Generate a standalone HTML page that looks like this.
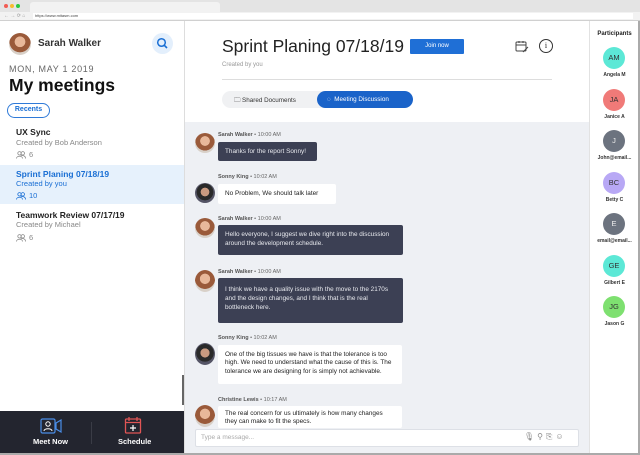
<!DOCTYPE html>
<html><head><meta charset="utf-8"><style>
*{margin:0;padding:0;box-sizing:border-box}
body{width:640px;height:455px;overflow:hidden;font-family:"Liberation Sans",sans-serif;background:#fff;position:relative;color:#222}
.a{position:absolute}
.av{border-radius:50%;position:absolute}
.bub{position:absolute;left:218px;font-size:6.4px;line-height:9px;padding:5px 7px;border-radius:2px}
.dk{background:#3c4054;color:#e8e9ee}
.wt{background:#fff;color:#222}
.nm{position:absolute;left:218px;font-size:5.5px;color:#666}
.nm b{color:#555}
.pc{position:absolute;left:603px;width:22px;height:22px;border-radius:50%;color:#333;font-size:7.5px;text-align:center;line-height:22px}
.pl{position:absolute;left:589px;width:51px;text-align:center;font-size:5px;font-weight:bold;color:#333}
.face{background:radial-gradient(circle at 50% 40%,#e8b89a 0 30%,#9a5a3a 32% 60%,#d8d0c8 62%)}
.face2{background:radial-gradient(circle at 50% 45%,#c99a80 0 28%,#2a2a2a 30% 55%,#556 57%)}
.cnt{position:absolute;left:16px;font-size:7.5px;color:#888;display:flex;align-items:center;gap:3px}
</style></head><body>
<div class="a" style="left:0;top:0;width:640px;height:12px;background:#e4e4e4"></div>
<div class="a" style="left:30px;top:2px;width:190px;height:10px;background:#f2f2f2;border-radius:3px 3px 0 0"></div>
<div class="av" style="left:4px;top:4px;width:4px;height:4px;background:#f25c54"></div>
<div class="av" style="left:10px;top:4px;width:4px;height:4px;background:#f6bc2f"></div>
<div class="av" style="left:16px;top:4px;width:4px;height:4px;background:#2ac840"></div>
<div class="a" style="left:0;top:12px;width:640px;height:9px;background:#f2f2f2;border-bottom:1px solid #d0d0d0"></div>
<div class="a" style="left:33px;top:13px;width:600px;height:6px;background:#fff;font-size:4px;line-height:6px;padding-left:2px;color:#444">https://www.mitasm.com</div>
<div class="a" style="left:4px;top:13px;font-size:5px;color:#999">← → ⟳ ⌂</div>
<div class="a" style="left:184px;top:21px;width:1px;height:434px;background:#ddd"></div>
<div class="av face" style="left:9px;top:33px;width:22px;height:22px"></div>
<div class="a" style="left:38px;top:38px;font-size:10px;font-weight:bold;color:#333">Sarah Walker</div>
<div class="av" style="left:152px;top:33px;width:21px;height:21px;background:#e3effc"></div>
<svg class="a" style="left:156px;top:37px" width="13" height="13" viewBox="0 0 13 13"><circle cx="5.5" cy="5.5" r="3.8" fill="none" stroke="#1a6fd4" stroke-width="1.5"/><path d="M8.3 8.3 11 11" stroke="#1a6fd4" stroke-width="1.6"/></svg>
<div class="a" style="left:9px;top:64px;font-size:9px;color:#666;letter-spacing:.7px">MON, MAY 1 2019</div>
<div class="a" style="left:9px;top:75px;font-size:17.5px;font-weight:bold;color:#111">My meetings</div>
<div class="a" style="left:7px;top:103px;width:43px;height:15px;border:1.2px solid #2f7ad8;border-radius:8px;font-size:7px;font-weight:bold;color:#1a6fd4;text-align:center;line-height:12.5px">Recents</div>
<div class="a" style="left:16px;top:127px;font-size:8.5px;font-weight:bold;color:#222">UX Sync</div>
<div class="a" style="left:16px;top:138px;font-size:7.5px;color:#888">Created by Bob Anderson</div>
<div class="cnt" style="top:150px"><svg width="10" height="8" viewBox="0 0 10 8"><circle cx="3.5" cy="2.3" r="1.7" fill="none" stroke="#888" stroke-width=".8"/><circle cx="6.8" cy="2.3" r="1.7" fill="none" stroke="#888" stroke-width=".8"/><path d="M.5 7.5c0-3 6-3 6 0M4.5 5c2-1 5-.5 5 2.5" fill="none" stroke="#888" stroke-width=".8"/></svg>6</div>
<div class="a" style="left:0;top:165px;width:184px;height:39px;background:#e6f1fc"></div>
<div class="a" style="left:16px;top:169px;font-size:8.5px;font-weight:bold;color:#1a6fd4">Sprint Planing 07/18/19</div>
<div class="a" style="left:16px;top:179px;font-size:7.5px;color:#1a6fd4">Created by you</div>
<div class="cnt" style="top:191px;color:#1a6fd4"><svg width="10" height="8" viewBox="0 0 10 8"><circle cx="3.5" cy="2.3" r="1.7" fill="none" stroke="#1a6fd4" stroke-width=".8"/><circle cx="6.8" cy="2.3" r="1.7" fill="none" stroke="#1a6fd4" stroke-width=".8"/><path d="M.5 7.5c0-3 6-3 6 0M4.5 5c2-1 5-.5 5 2.5" fill="none" stroke="#1a6fd4" stroke-width=".8"/></svg>10</div>
<div class="a" style="left:16px;top:210px;font-size:8.5px;font-weight:bold;color:#222">Teamwork Review 07/17/19</div>
<div class="a" style="left:16px;top:220px;font-size:7.5px;color:#888">Created by Michael</div>
<div class="cnt" style="top:233px"><svg width="10" height="8" viewBox="0 0 10 8"><circle cx="3.5" cy="2.3" r="1.7" fill="none" stroke="#888" stroke-width=".8"/><circle cx="6.8" cy="2.3" r="1.7" fill="none" stroke="#888" stroke-width=".8"/><path d="M.5 7.5c0-3 6-3 6 0M4.5 5c2-1 5-.5 5 2.5" fill="none" stroke="#888" stroke-width=".8"/></svg>6</div>
<div class="a" style="left:182px;top:375px;width:2px;height:30px;background:#666"></div>
<div class="a" style="left:0;top:411px;width:184px;height:44px;background:#23252f"></div>
<div class="a" style="left:91px;top:422px;width:1px;height:22px;background:#3a3c46"></div>
<svg class="a" style="left:40px;top:418px" width="24" height="16" viewBox="0 0 24 16"><rect x="1" y="1" width="14" height="14" rx="1.5" fill="none" stroke="#4a8ee8" stroke-width="1.2"/><circle cx="8" cy="6" r="2.2" fill="none" stroke="#fff" stroke-width="1"/><path d="M4 13c0-3 8-3 8 0" fill="none" stroke="#fff" stroke-width="1"/><path d="M16 5l5-3v12l-5-3z" fill="none" stroke="#4a8ee8" stroke-width="1.2"/></svg>
<div class="a" style="left:33px;top:437px;font-size:7.5px;color:#fff;font-weight:bold">Meet Now</div>
<svg class="a" style="left:124px;top:416px" width="18" height="18" viewBox="0 0 18 18"><rect x="1.5" y="3" width="15" height="14" rx="1" fill="none" stroke="#e05555" stroke-width="1.3"/><path d="M1.5 6.5h15M5 1v4M13 1v4" stroke="#e05555" stroke-width="1.3"/><path d="M9 9v6M6 12h6" stroke="#fff" stroke-width="1.2"/></svg>
<div class="a" style="left:118px;top:437px;font-size:7.5px;color:#fff;font-weight:bold">Schedule</div>
<div class="a" style="left:222px;top:36px;font-size:17.5px;color:#222">Sprint Planing 07/18/19</div>
<div class="a" style="left:410px;top:39px;width:54px;height:15px;background:#1f6fd6;border-radius:1px;color:#fff;font-size:6px;text-align:center;line-height:15px">Join now</div>
<svg class="a" style="left:515px;top:40px" width="14" height="14" viewBox="0 0 14 14"><rect x="1" y="2" width="10" height="9" rx="1" fill="none" stroke="#444" stroke-width="1"/><path d="M1 5h10M4 1v2M8 1v2M8 12l5-5" stroke="#444" stroke-width="1"/></svg>
<div class="av" style="left:539px;top:39px;width:14px;height:14px;border:1.2px solid #333;font-size:8px;text-align:center;line-height:11px;font-family:'Liberation Serif',serif">i</div>
<div class="a" style="left:222px;top:62px;font-size:6px;color:#999">Created by you</div>
<div class="a" style="left:222px;top:79px;width:330px;height:1px;background:#ddd"></div>
<div class="a" style="left:222px;top:91px;width:190px;height:17px;background:#f0f1f3;border-radius:9px"></div>
<div class="a" style="left:234px;top:95px;font-size:6.3px;color:#333">🗀 Shared Documents</div>
<div class="a" style="left:317px;top:91px;width:96px;height:17px;background:#1a63c9;border-radius:9px;color:#fff;font-size:6.3px;line-height:17px;padding-left:10px">◌ &nbsp;Meeting Discussion</div>
<div class="a" style="left:185px;top:122px;width:404px;height:333px;background:#eef0f4"></div>
<div class="av face" style="left:195px;top:133px;width:20px;height:20px"></div>
<div class="nm" style="top:132px"><b>Sarah Walker</b> • 10:00 AM</div>
<div class="bub dk" style="top:142px;width:99px;height:19px">Thanks for the report Sonny!</div>
<div class="av face2" style="left:195px;top:183px;width:20px;height:20px"></div>
<div class="nm" style="top:174px"><b>Sonny King</b> • 10:02 AM</div>
<div class="bub wt" style="top:184px;width:118px;height:20px">No Problem, We should talk later</div>
<div class="av face" style="left:195px;top:218px;width:20px;height:20px"></div>
<div class="nm" style="top:216px"><b>Sarah Walker</b> • 10:00 AM</div>
<div class="bub dk" style="top:225px;width:185px;height:30px">Hello everyone, I suggest we dive right into the discussion around the development schedule.</div>
<div class="av face" style="left:195px;top:270px;width:20px;height:22px"></div>
<div class="nm" style="top:269px"><b>Sarah Walker</b> • 10:00 AM</div>
<div class="bub dk" style="top:278px;width:185px;height:45px;padding-top:7px">I think we have a quality issue with the move to the 2170s and the design changes, and I think that is the real bottleneck here.</div>
<div class="av face2" style="left:195px;top:343px;width:20px;height:22px"></div>
<div class="nm" style="top:335px"><b>Sonny King</b> • 10:02 AM</div>
<div class="bub wt" style="top:345px;width:184px;height:39px;padding-top:6px;line-height:8.3px">One of the big tissues we have is that the tolerance is too high. We need to understand what the cause of this is. The tolerance we are designing for is simply not achievable.</div>
<div class="av face" style="left:195px;top:405px;width:20px;height:22px"></div>
<div class="nm" style="top:397px"><b>Christine Lewis</b> • 10:17 AM</div>
<div class="bub wt" style="top:406px;width:184px;height:22px;padding-top:4px;line-height:8.3px">The real concern for us ultimately is how many changes they can make to fit the specs.</div>
<div class="a" style="left:195px;top:429px;width:384px;height:18px;background:#fff;border:1px solid #dde0e6;border-radius:2px;font-size:6.5px;color:#aaa;line-height:16px;padding-left:5px">Type a message...</div>
<div class="a" style="left:524px;top:432px;font-size:8px;color:#888;letter-spacing:3px">🎙⚲⎘☺</div>
<div class="a" style="left:589px;top:21px;width:1px;height:434px;background:#e2e2e2"></div>
<div class="a" style="left:589px;top:31px;width:51px;text-align:center;font-size:6px;font-weight:bold">Participants</div>
<div class="pc" style="top:47px;background:#5ce8d6">AM</div><div class="pl" style="top:72px">Angela M</div>
<div class="pc" style="top:89px;background:#f07a78">JA</div><div class="pl" style="top:114px">Janice A</div>
<div class="pc" style="top:130px;background:#6c737f;color:#eee">J</div><div class="pl" style="top:155px">John@email...</div>
<div class="pc" style="top:172px;background:#b8a8f5">BC</div><div class="pl" style="top:197px">Betty C</div>
<div class="pc" style="top:213px;background:#6c737f;color:#eee">E</div><div class="pl" style="top:238px">email@email...</div>
<div class="pc" style="top:255px;background:#5ce8d6">GE</div><div class="pl" style="top:280px">Gilbert E</div>
<div class="pc" style="top:296px;background:#7ee070">JG</div><div class="pl" style="top:321px">Jason G</div>
<div class="a" style="left:638px;top:21px;width:2px;height:434px;background:#aaa"></div>
<div class="a" style="left:0;top:453px;width:640px;height:2px;background:#aaa"></div>
</body></html>
